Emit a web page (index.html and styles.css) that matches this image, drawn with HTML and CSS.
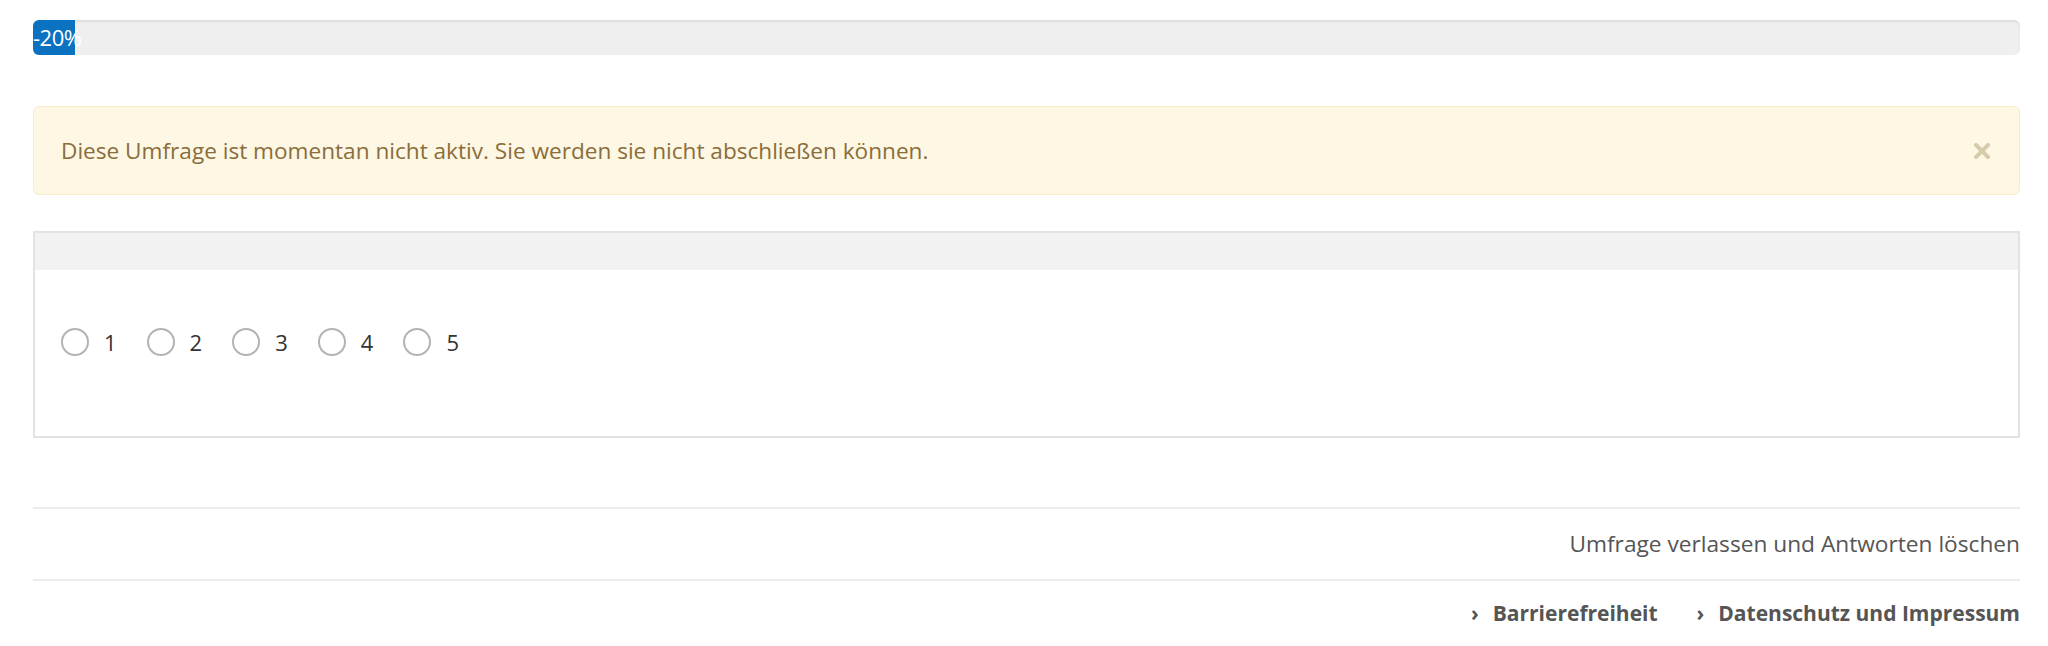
FILE: index.html
```html
<!DOCTYPE html>
<html lang="de">
<head>
<meta charset="utf-8">
<title>Umfrage</title>
<link rel="stylesheet" href="styles.css">
</head>
<body>
<div class="page">
  <div class="progress">
    <div class="progress-bar" style="width: 42px;">-20%</div>
  </div>

  <div class="alert">
    <span class="alert-text">Diese Umfrage ist momentan nicht aktiv. Sie werden sie nicht abschließen können.</span>
    <button class="close" aria-label="Schließen">
      <svg width="16" height="16" viewBox="0 0 16 16"><path d="M2 2 L14 14 M14 2 L2 14" stroke="#d6ccab" stroke-width="4" stroke-linecap="square"/></svg>
    </button>
  </div>

  <div class="question">
    <div class="question-head"></div>
    <div class="question-body">
      <label class="option"><span class="radio"></span><span class="num">1</span></label>
      <label class="option"><span class="radio"></span><span class="num">2</span></label>
      <label class="option"><span class="radio"></span><span class="num">3</span></label>
      <label class="option"><span class="radio"></span><span class="num">4</span></label>
      <label class="option"><span class="radio"></span><span class="num">5</span></label>
    </div>
  </div>

  <div class="footer">
    <div class="footer-row">Umfrage verlassen und Antworten löschen</div>
    <div class="footer-links">
      <a class="link"><span class="chev">›</span>Barrierefreiheit</a>
      <a class="link"><span class="chev">›</span>Datenschutz und Impressum</a>
    </div>
  </div>
</div>
</body>
</html>
```

FILE: styles.css
```css
html, body {
  margin: 0;
  padding: 0;
  background: #fff;
}

body {
  font-family: "Open Sans", "Noto Sans", sans-serif;
  font-size: 22px;
  color: #333;
}

.page {
  margin: 0 28px 0 33px;
  padding-top: 20px;
}

/* progress */
.progress {
  height: 35px;
  background: #efefef;
  border-radius: 6px;
  box-shadow: inset 0 2px 2px rgba(0, 0, 0, 0.08);
  display: flex;
}

.progress-bar {
  background: #0b71c1;
  color: #fff;
  border-radius: 6px 0 0 6px;
  line-height: 35px;
  font-size: 22px;
  white-space: nowrap;
  letter-spacing: -0.5px;
}

/* alert */
.alert {
  margin-top: 51px;
  height: 87px;
  background: #fdf7e3;
  border: 1px solid #faebcc;
  border-radius: 6px;
  display: flex;
  align-items: center;
  justify-content: space-between;
  padding: 0 27px;
  color: #8a6d3b;
}

.alert-text {
  font-size: 22.6px;
}

.close {
  background: none;
  border: 0;
  padding: 0;
  margin-right: 2px;
  display: flex;
}

/* question */
.question {
  margin-top: 36px;
  border: 2px solid #e3e3e3;
}

.question-head {
  height: 37px;
  background: #f2f2f2;
}

.question-body {
  height: 166px;
  padding: 58px 0 0 26px;
  box-sizing: border-box;
  display: flex;
  align-items: flex-start;
  gap: 30px;
}

.option {
  display: flex;
  align-items: center;
  gap: 15px;
  height: 28px;
}

.radio {
  width: 24px;
  height: 24px;
  border: 2px solid #b3b3b3;
  border-radius: 50%;
  background: #fff;
}

.num {
  font-size: 22px;
  color: #333;
  line-height: 28px;
}

/* footer */
.footer {
  margin-top: 69px;
}

.footer-row {
  border-top: 2px solid #ececec;
  border-bottom: 2px solid #ececec;
  height: 70px;
  line-height: 70px;
  text-align: right;
  color: #555;
  font-size: 22.7px;
}

.footer-links {
  display: flex;
  justify-content: flex-end;
  gap: 39px;
  height: 64px;
  align-items: center;
}

.link {
  color: #555;
  font-weight: 700;
  font-size: 21px;
}

.chev {
  display: inline-block;
  margin-right: 14px;
  font-size: 21px;
}
```
